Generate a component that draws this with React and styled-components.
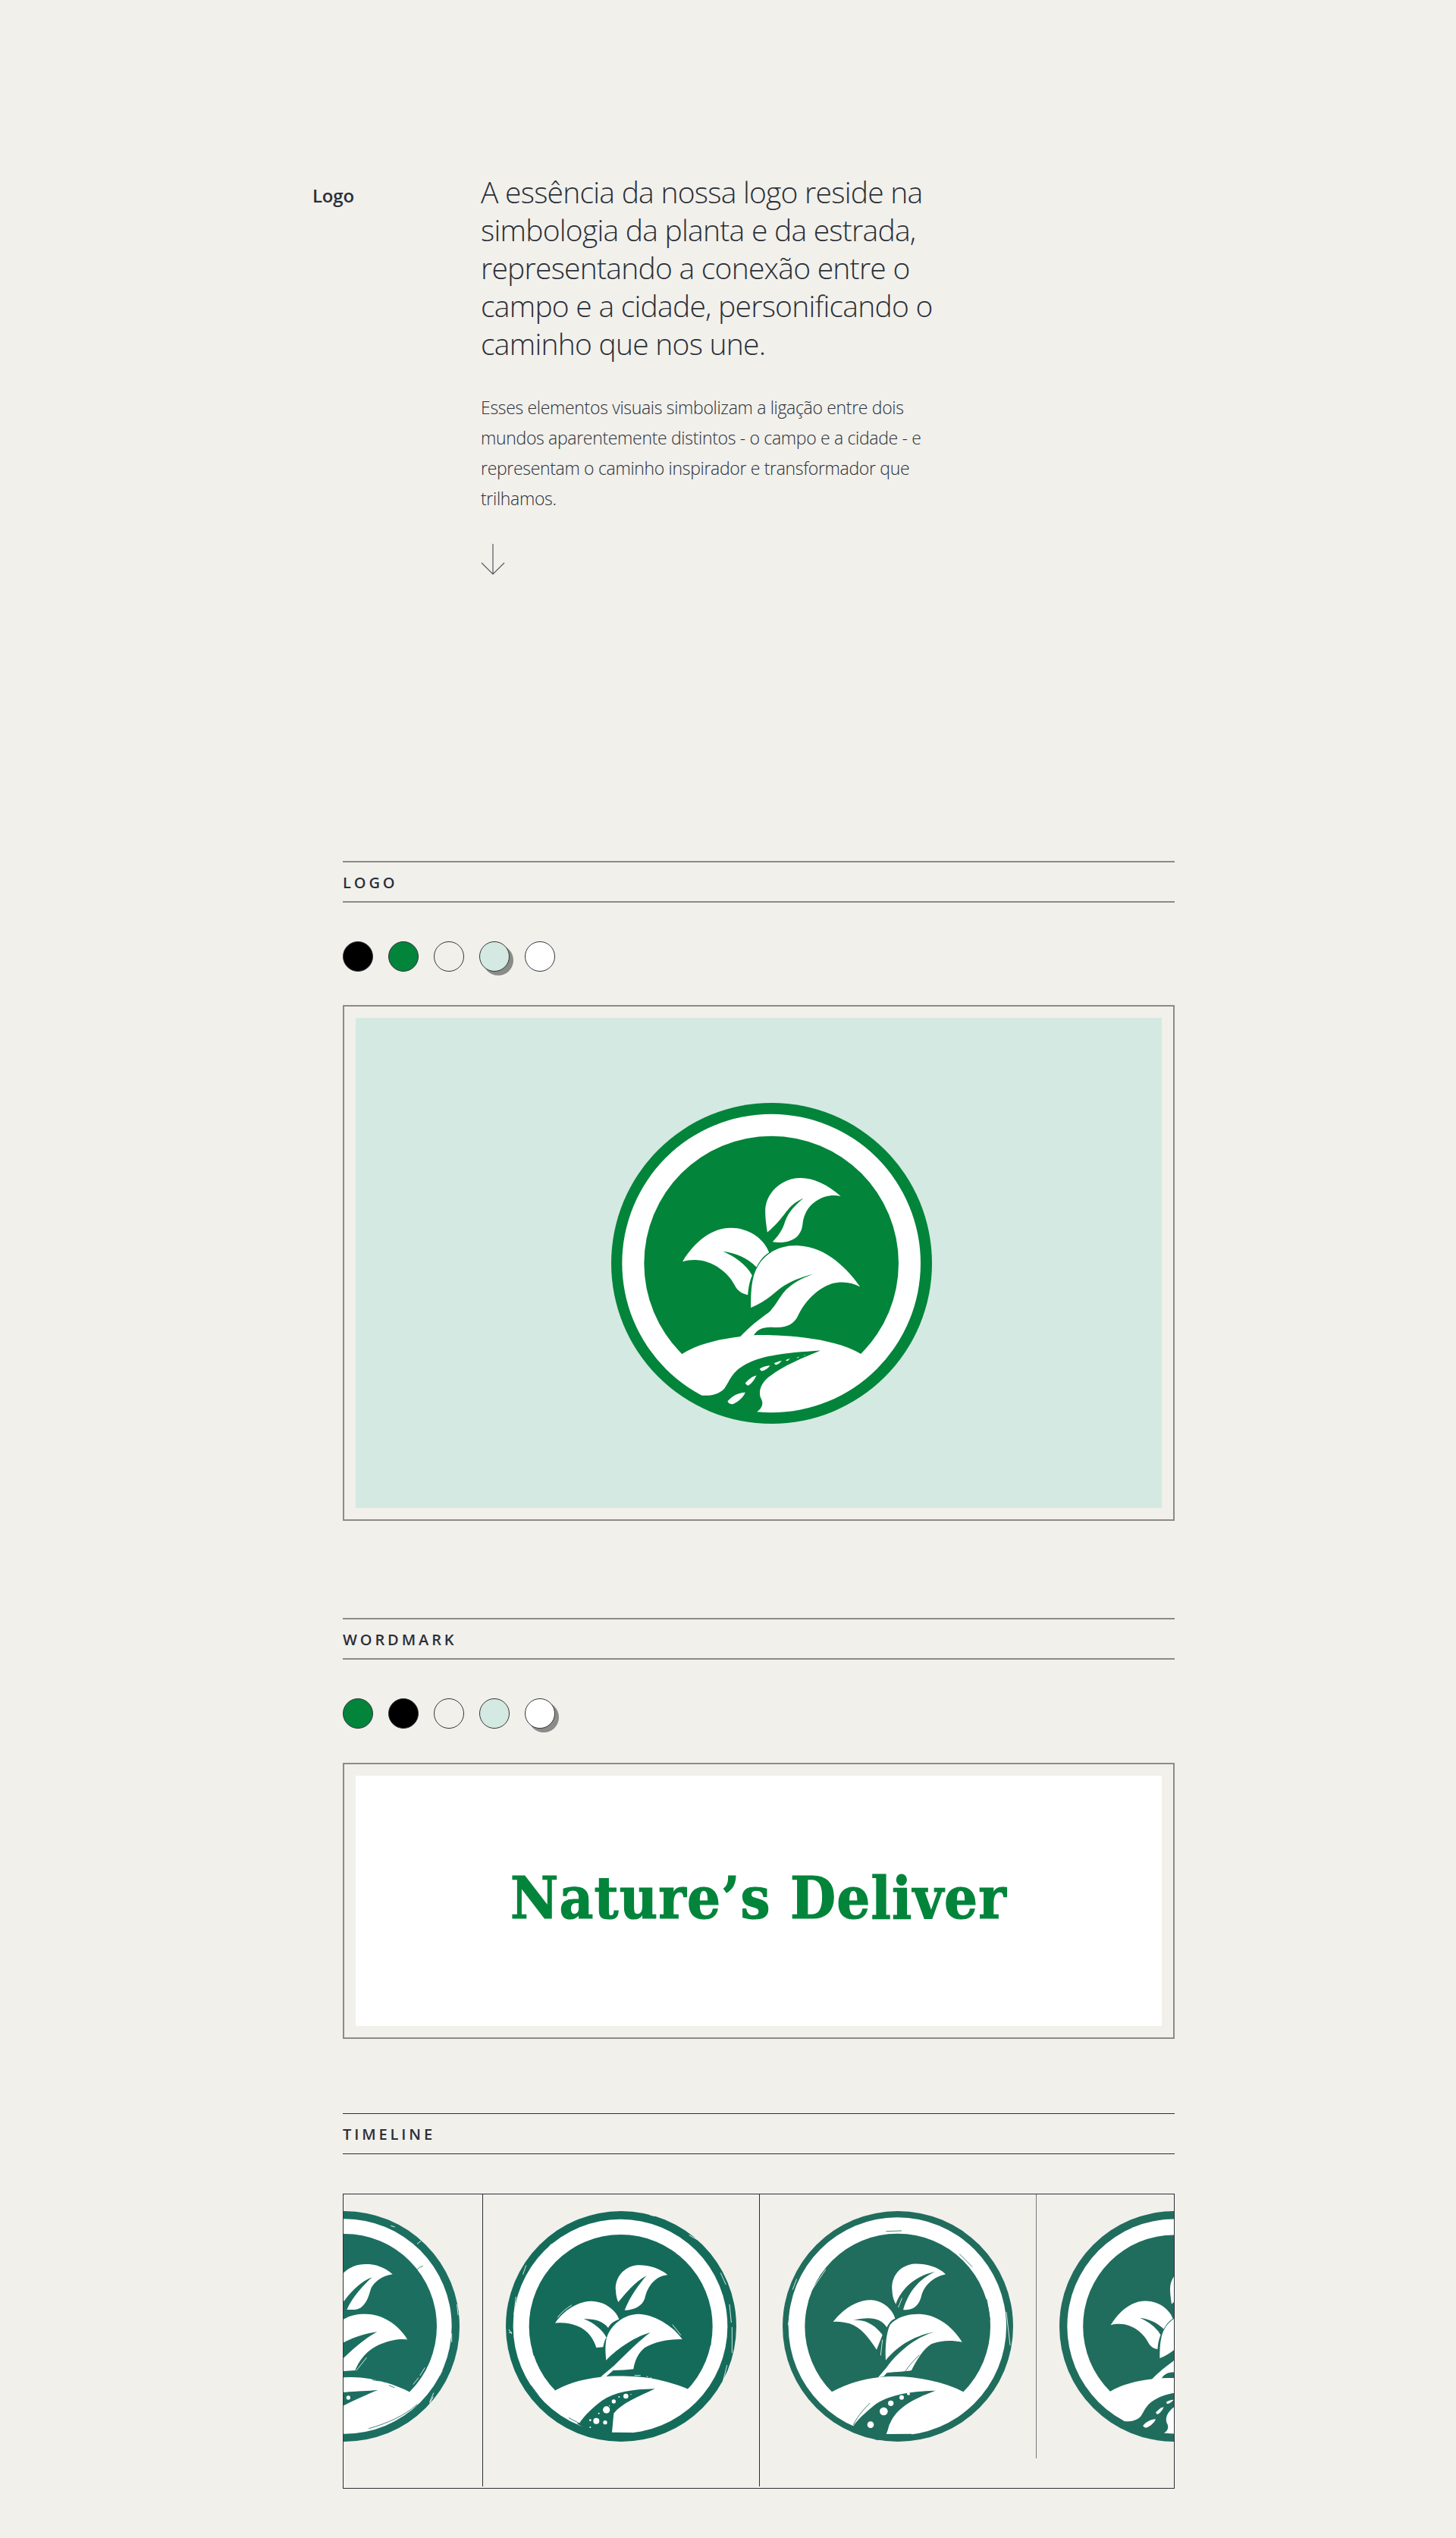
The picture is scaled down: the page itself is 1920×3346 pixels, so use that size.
import React from "react";
import styled, { createGlobalStyle } from "styled-components";

const GlobalStyle = createGlobalStyle`
  html, body { margin: 0; padding: 0; background: #f1f0eb; }
  body { font-family: "Open Sans", "Noto Sans", sans-serif; color: #2b2f38; }
`;

const Page = styled.main`
  width: 1920px;
  height: 3346px;
  box-sizing: border-box;
  padding-top: 228px;
  background: #f1f0eb;
  overflow: hidden;
`;

const Intro = styled.section`
  display: grid;
  grid-template-columns: 222px 1fr;
  padding-left: 412px;
  margin-bottom: 376px;
`;

const IntroLabel = styled.h2`
  margin: 0;
  font-size: 24px;
  font-weight: 600;
  line-height: 60px;
  letter-spacing: -0.2px;
`;

const IntroBody = styled.div`
  display: flex;
  flex-direction: column;
  align-items: flex-start;
`;

const Lead = styled.p`
  margin: 0;
  font-size: 39px;
  font-weight: 300;
  line-height: 50px;
  letter-spacing: -0.75px;
  white-space: nowrap;
`;

const Copy = styled.p`
  margin: 39px 0 0;
  font-size: 23px;
  font-weight: 300;
  line-height: 40px;
  letter-spacing: -0.32px;
  white-space: nowrap;
`;

const ArrowMark = styled.svg`
  display: block;
  margin-top: 40px;
  width: 32px;
  height: 42px;
`;

const Section = styled.section`
  width: 1097px;
  margin-left: 452px;
  margin-bottom: ${(p) => p.$after || 0}px;
`;

const SectionHead = styled.header`
  box-sizing: border-box;
  height: ${(p) => (p.$dark ? 54 : 55)}px;
  padding-top: 2px;
  display: flex;
  align-items: center;
  border-top: ${(p) => (p.$dark ? "1px solid #2b2f38" : "2px solid #8b8b89")};
  border-bottom: ${(p) => (p.$dark ? "1px solid #2b2f38" : "2px solid #8b8b89")};
`;

const SectionTitle = styled.h3`
  margin: 0;
  font-size: 20px;
  font-weight: 600;
  letter-spacing: 3.9px;
  line-height: 1;
`;

const Swatches = styled.div`
  display: flex;
  gap: 20px;
  margin: 51px 0 ${(p) => p.$below}px;
`;

const Swatch = styled.span`
  box-sizing: border-box;
  display: block;
  width: 40px;
  height: 40px;
  border-radius: 50%;
  border: 1px solid #33363b;
  background: ${(p) => p.$color};
  box-shadow: ${(p) => (p.$active ? "5px 5px 0 #8b8b89" : "none")};
`;

const Frame = styled.div`
  box-sizing: border-box;
  border: 2px solid #8b8b89;
  padding: 15px;
`;

const LogoPanel = styled.div`
  box-sizing: border-box;
  height: 646px;
  padding-left: 34px;
  display: flex;
  align-items: center;
  justify-content: center;
  background: #d4e9e1;
`;

const WordPanel = styled.div`
  box-sizing: border-box;
  height: 330px;
  padding-bottom: 7px;
  display: flex;
  align-items: center;
  justify-content: center;
  background: #ffffff;
`;

const Wordmark = styled.span`
  font-family: "DejaVu Serif Condensed", "DejaVu Serif", serif;
  font-stretch: condensed;
  font-weight: 700;
  font-size: 77px;
  line-height: 1;
  color: #02843a;
  letter-spacing: 1.2px;
  -webkit-text-stroke: 1.2px #02843a;
`;

const TimelineFrame = styled.div`
  box-sizing: border-box;
  height: 389px;
  margin-top: 52px;
  border: 1px solid #2b2f38;
  overflow: hidden;
`;

const TimelineTrack = styled.div`
  display: flex;
  align-items: flex-start;
  margin-left: -181px;
  width: max-content;
`;

const TimelineItem = styled.div`
  box-sizing: border-box;
  width: 365px;
  height: ${(p) => p.$height}px;
  padding-top: 22px;
  display: flex;
  justify-content: center;
  align-items: flex-start;
  border-right: 1px solid ${(p) => (p.$soft ? "#77797b" : "#2b2f38")};
`;

const MarkSvg = styled.svg`
  display: block;
  flex: none;
`;

/* ---- primary mark ---- */
const PRIMARY_WHITE = [
  "M955,410 C900,360 840,335 790,338 C720,340 655,400 657,470 C657,500 662,530 665,552 C700,525 725,490 745,465 C765,440 785,428 808,418 C775,445 750,470 735,510 C725,545 705,570 686,590 C720,597 770,590 790,560 C810,535 800,510 815,480 C835,430 900,395 955,410Z",
  "M330,668 C380,585 450,535 520,535 C590,535 650,575 672,632 C650,645 635,665 622,690 C585,652 540,635 490,628 C540,650 580,680 605,722 C595,745 590,770 588,800 C560,795 545,780 535,760 C510,710 430,640 330,668Z",
  "M1032,768 C985,700 900,610 790,605 C700,600 630,650 610,730 C600,770 600,810 600,850 C640,835 680,805 715,775 C755,745 800,730 845,718 C800,735 760,755 730,790 C710,815 700,840 670,870 C640,890 590,930 555,968 L610,962 C625,935 650,925 690,928 C740,932 770,915 785,885 C810,830 860,775 920,755 C960,745 1000,750 1032,768Z",
  "M328,1033 C390,995 470,975 555,965 C620,955 700,958 780,965 C880,975 970,995 1035,1033 L1041,1040 A513,513 0 0 1 321,1040Z",
];
const PRIMARY_ROAD =
  "M875,1020 C760,1028 640,1035 570,1080 C520,1110 515,1145 495,1170 C475,1192 440,1200 405,1197 L500,1270 L620,1272 L620,1265 C650,1245 650,1225 638,1205 C630,1180 640,1150 670,1125 C720,1085 800,1050 875,1020Z";
const PRIMARY_DASH = [
  "M508,1220 C525,1200 550,1185 578,1185 C570,1205 550,1222 528,1232 C518,1232 510,1228 508,1220Z",
  "M578,1148 C590,1135 605,1122 622,1118 C615,1135 605,1148 590,1158 C585,1158 580,1154 578,1148Z",
  "M635,1092 C648,1084 660,1080 676,1079 C668,1090 658,1097 644,1101 C640,1100 637,1097 635,1092Z",
  "M692,1070 C700,1066 710,1062 722,1060 C716,1068 708,1074 698,1077Z",
  "M738,1057 L754,1051 L748,1059 L741,1061Z",
  "M780,1048 L792,1044 L786,1050Z",
  "M808,1039 L816,1036 L812,1040Z",
];

const PrimaryMark = ({ color, size }) => (
  <MarkSvg viewBox="48 42 1268 1266" width={size} height={size} aria-hidden="true">
    <circle cx="682" cy="675" r="634" fill={color} />
    <circle cx="681" cy="675" r="590" fill="#fff" />
    <circle cx="681" cy="675" r="503" fill={color} />
    {PRIMARY_WHITE.map((d) => (
      <path key={d} d={d} fill="#fff" />
    ))}
    <path d={PRIMARY_ROAD} fill={color} />
    {PRIMARY_DASH.map((d) => (
      <path key={d} d={d} fill="#fff" />
    ))}
  </MarkSvg>
);

/* ---- distressed marks of the timeline ---- */
const Distressed = ({ color, box, outer, ring, inner, white, road, dots, inkLines, whiteLines, nicks }) => (
  <MarkSvg viewBox={box} width={304} height={304} aria-hidden="true">
    <circle {...outer} fill={color} />
    <circle {...ring} fill="#fff" />
    <circle {...inner} fill={color} />
    {white.map((d) => (
      <path key={d} d={d} fill="#fff" />
    ))}
    <path d={road} fill={color} />
    {dots.map(([cx, cy, r]) => (
      <circle key={`${cx}-${cy}`} cx={cx} cy={cy} r={r} fill="#fff" />
    ))}
    {inkLines.map((d) => (
      <path key={d} d={d} fill="none" stroke={color} strokeWidth="2.5" strokeLinecap="round" />
    ))}
    {whiteLines.map((d) => (
      <path key={d} d={d} fill="none" stroke="#fff" strokeWidth="2.5" strokeLinecap="round" />
    ))}
    {(nicks || []).map((d) => (
      <path key={d} d={d} fill="none" stroke="#f1f0eb" strokeWidth="3" />
    ))}
  </MarkSvg>
);

const STAGE_ONE = {
  color: "#1c6f60",
  box: "-444 30 912 912",
  outer: { cx: 12, cy: 486, r: 456 },
  ring: { cx: 12, cy: 486, r: 425 },
  inner: { cx: 12, cy: 486, r: 366 },
  white: [
    "M203,280 C170,250 130,238 95,240 C50,240 10,262 -20,310 L-20,400 L12,385 C45,340 85,305 122,292 C85,325 45,370 22,420 C50,420 70,422 85,405 C105,385 110,360 118,335 C135,305 165,285 203,280Z",
    "M260,535 C225,480 160,435 95,437 C50,437 20,445 -20,480 L-20,565 L12,548 C60,525 100,513 142,508 C100,530 50,570 -20,640 L-20,665 L55,660 C80,600 130,540 260,535Z",
    "M-248,746 C-150,710 -60,695 12,688 C100,680 200,710 272,746 L280,754 A378,378 0 0 1 -256,754Z",
  ],
  road: "M145,738 C100,742 50,742 -30,750 L-30,818 C60,775 100,755 145,738Z",
  dots: [[28, 768, 8]],
  inkLines: [
    "M220,225 L236,238",
    "M300,262 C306,255 312,250 322,248",
    "M190,720 L210,728",
    "M125,698 L150,702",
    "M110,890 C180,870 250,840 300,795",
    "M190,88 L212,98",
    "M150,80 L185,95",
    "M110,68 L135,72",
    "M330,190 L345,215",
  ],
  whiteLines: [
    "M190,530 L260,537",
    "M60,660 L100,610",
    "M285,715 L305,690",
    "M312,680 L330,650",
    "M458,400 L462,440",
    "M437,515 L437,548",
    "M350,785 L365,750",
    "M400,660 L390,680",
    "M12,745 L35,742",
  ],
  nicks: ["M196,88 L212,93", "M350,790 L364,764", "M300,160 L315,148"],
};

const STAGE_TWO = {
  color: "#156b5a",
  box: "20 30 912 912",
  outer: { cx: 476, cy: 486, r: 456 },
  ring: { cx: 473, cy: 486, r: 424 },
  inner: { cx: 475, cy: 486, r: 363 },
  white: [
    "M660,282 C620,250 570,240 530,245 C480,255 450,300 455,345 C456,365 460,380 465,390 C490,360 530,310 577,285 C550,315 510,370 490,422 C530,422 560,405 570,375 C578,340 600,290 660,282Z",
    "M215,473 C250,420 310,385 360,386 C410,387 455,420 468,458 C445,465 430,480 425,492 C405,465 370,455 328,457 C370,470 405,505 418,530 C410,540 408,555 405,568 L378,570 C370,540 345,500 305,485 C275,473 245,470 215,473Z",
    "M718,537 C680,480 600,437 545,437 C490,437 430,480 417,540 C412,570 415,595 417,620 C450,585 520,530 592,510 C550,540 500,590 450,640 L395,686 L415,686 L445,660 C470,660 500,658 525,655 C530,620 545,590 570,570 C610,545 670,535 718,537Z",
    "M218,738 C280,705 340,692 395,686 C450,680 540,682 600,692 C650,702 700,716 738,733 L745,740 A373,373 0 0 1 211,745Z",
  ],
  road: "M610,733 C520,735 450,745 400,780 C360,810 330,840 312,868 L300,870 L400,925 L520,925 L520,906 L440,905 L447,830 C480,790 540,765 610,733Z",
  dots: [
    [495, 762, 10], [447, 783, 8], [468, 765, 3], [418, 816, 14], [378, 860, 12],
    [413, 866, 8], [388, 830, 3], [354, 857, 4], [354, 885, 3], [430, 800, 2], [515, 755, 2],
  ],
  inkLines: [
    "M270,848 L312,870",
    "M175,680 L210,725",
    "M215,855 L260,880",
    "M655,175 L690,195",
    "M125,565 L130,600",
    "M120,720 L150,760",
    "M535,625 L562,592",
    "M820,390 L830,440",
    "M832,500 L830,560",
  ],
  whiteLines: [
    "M225,450 C240,430 260,415 280,402",
    "M530,680 L552,680",
    "M578,684 L582,686",
    "M590,690 L596,690",
    "M60,370 L52,440",
    "M88,280 L100,245",
    "M870,275 L890,320",
    "M905,400 L912,470",
    "M915,490 L915,590",
    "M148,225 L200,160",
    "M895,640 L880,700",
    "M680,480 L712,520",
  ],
  nicks: ["M32,498 L44,516", "M32,510 L44,510", "M590,45 L610,50", "M745,125 L790,150"],
};

const STAGE_THREE = {
  color: "#206d5d",
  box: "20 30 912 912",
  outer: { cx: 476, cy: 486, r: 456 },
  ring: { cx: 474, cy: 486, r: 431 },
  inner: { cx: 475, cy: 486, r: 367 },
  white: [
    "M665,280 C630,245 570,235 530,240 C480,250 450,290 453,340 C454,365 460,385 468,398 C485,350 530,290 622,270 C560,300 520,345 497,420 C540,425 560,400 568,370 C580,320 620,290 665,280Z",
    "M220,468 C260,415 320,380 370,382 C420,385 455,420 465,455 C450,460 440,475 432,490 C410,455 370,445 298,462 C350,455 390,485 415,520 L392,578 C360,530 330,490 285,475 C260,468 240,466 220,468Z",
    "M730,548 C690,480 620,437 560,437 C510,437 470,450 445,480 C430,510 425,570 428,620 C470,570 530,525 622,508 C560,525 490,570 430,650 L398,688 L420,684 L432,670 C470,665 510,665 530,660 C550,620 580,570 610,555 C650,540 690,540 730,548Z",
    "M215,745 C280,710 340,695 398,688 C500,675 640,695 735,745 L742,752 A377,377 0 0 1 208,752Z",
  ],
  road: "M625,740 C520,742 430,760 380,800 C345,830 320,850 300,880 L290,882 L390,935 L530,935 L530,911 L430,912 C440,890 440,875 445,870 C470,810 530,775 625,740Z",
  dots: [[518, 752, 6], [491, 767, 9], [448, 790, 11], [420, 822, 16], [368, 875, 13]],
  inkLines: [
    "M300,875 C320,835 345,810 365,790",
    "M505,665 C520,640 545,615 560,600",
    "M720,200 L770,250",
    "M760,835 L805,790",
    "M250,718 L275,708",
    "M430,110 L490,108",
    "M828,380 L840,460",
  ],
  whiteLines: [
    "M55,400 L42,480",
    "M75,300 L60,340",
    "M130,350 L190,262",
    "M100,470 L105,520",
    "M120,385 L108,440",
    "M905,430 L920,560",
    "M570,740 L600,738",
    "M478,410 L492,375",
    "M415,540 L408,600",
  ],
};

const LOGO_SWATCHES = [
  { color: "#000000" },
  { color: "#02843a" },
  { color: "#f1f0eb" },
  { color: "#d4e9e1", active: true },
  { color: "#ffffff" },
];

const WORD_SWATCHES = [
  { color: "#02843a" },
  { color: "#000000" },
  { color: "#f1f0eb" },
  { color: "#d4e9e1" },
  { color: "#ffffff", active: true },
];

const SwatchRow = ({ items, below }) => (
  <Swatches $below={below}>
    {items.map((s) => (
      <Swatch key={s.color} $color={s.color} $active={s.active} />
    ))}
  </Swatches>
);

export default function App() {
  return (
    <>
      <GlobalStyle />
      <Page>
        <Intro>
          <IntroLabel>Logo</IntroLabel>
          <IntroBody>
            <Lead>
              A essência da nossa logo reside na
              <br />
              simbologia da planta e da estrada,
              <br />
              representando a conexão entre o
              <br />
              campo e a cidade, personificando o
              <br />
              caminho que nos une.
            </Lead>
            <Copy>
              Esses elementos visuais simbolizam a ligação entre dois
              <br />
              mundos aparentemente distintos - o campo e a cidade - e
              <br />
              representam o caminho inspirador e transformador que
              <br />
              trilhamos.
            </Copy>
            <ArrowMark viewBox="0 0 32 42" fill="none" stroke="#55585c" strokeWidth="1.2" aria-hidden="true">
              <path d="M16 0V40M1 25L16 40L31 25" />
            </ArrowMark>
          </IntroBody>
        </Intro>

        <Section $after={128}>
          <SectionHead>
            <SectionTitle>LOGO</SectionTitle>
          </SectionHead>
          <SwatchRow items={LOGO_SWATCHES} below={44} />
          <Frame>
            <LogoPanel>
              <PrimaryMark color="#02843a" size={423} />
            </LogoPanel>
          </Frame>
        </Section>

        <Section $after={98}>
          <SectionHead>
            <SectionTitle>WORDMARK</SectionTitle>
          </SectionHead>
          <SwatchRow items={WORD_SWATCHES} below={45} />
          <Frame>
            <WordPanel>
              <Wordmark>Nature’s Deliver</Wordmark>
            </WordPanel>
          </Frame>
        </Section>

        <Section>
          <SectionHead $dark>
            <SectionTitle>TIMELINE</SectionTitle>
          </SectionHead>
          <TimelineFrame>
            <TimelineTrack>
              <TimelineItem $height={385}>
                <Distressed {...STAGE_ONE} />
              </TimelineItem>
              <TimelineItem $height={385}>
                <Distressed {...STAGE_TWO} />
              </TimelineItem>
              <TimelineItem $height={348} $soft>
                <Distressed {...STAGE_THREE} />
              </TimelineItem>
              <TimelineItem $height={348}>
                <PrimaryMark color="#206d5d" size={304} />
              </TimelineItem>
            </TimelineTrack>
          </TimelineFrame>
        </Section>
      </Page>
    </>
  );
}
